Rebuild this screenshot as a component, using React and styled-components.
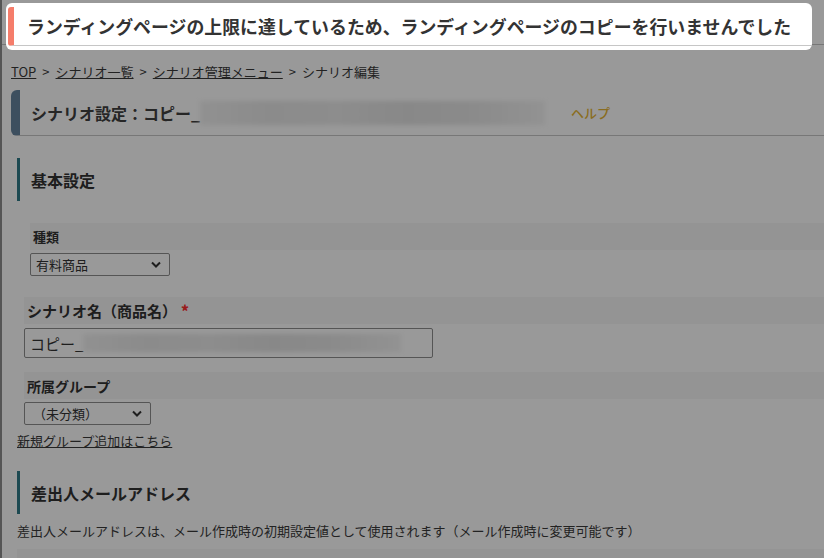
import React from 'react'
import styled, { createGlobalStyle } from 'styled-components'

const GlobalStyle = createGlobalStyle`
  html, body {
    margin: 0;
    padding: 0;
    background: #fff;
  }
  body {
    font-family: "Noto Sans CJK JP", "Noto Sans", sans-serif;
    color: #383838;
    overflow: hidden;
  }
`

const Page = styled.div`
  position: relative;
  min-height: 558px;
  border-left: 2px solid #8e8e8e;
  box-sizing: border-box;
`

const TopBar = styled.div`
  height: 44px;
  border-bottom: 1px solid #c6c6c6;
`

const Breadcrumb = styled.nav`
  margin: 17px 0 0 9px;
  font-size: 13px;
  line-height: 20px;
  color: #3a3a3a;
  display: flex;
  gap: 6px;
  a {
    color: #3a3a3a;
    text-decoration: underline;
  }
`

const PageHeader = styled.div`
  margin: 8px 0 0 9px;
  height: 45px;
  display: flex;
  align-items: center;
  border-bottom: 1px solid #c6c6c6;
  border-left: 9px solid #67849e;
  border-radius: 6px 0 0 6px;
  padding-left: 11px;
`

const PageTitle = styled.h1`
  margin: 0;
  font-size: 16px;
  font-weight: 700;
  color: #404040;
  display: flex;
  align-items: center;
`

const Blur = styled.span`
  display: inline-block;
  width: ${p => p.$w}px;
  height: ${p => p.$h}px;
  background: linear-gradient(90deg, #f2f2f2 0%, #e8e8e8 20%, #ebebeb 40%, #e3e3e3 60%, #e8e8e8 80%, #f4f4f4 100%);
  filter: blur(2px);
`

const HelpLink = styled.a`
  margin-left: 26px;
  font-size: 13px;
  color: #e6b534;
  font-weight: 500;
`

const Body = styled.div`
  padding-left: 15px;
`

const SectionTitle = styled.h2`
  margin: ${p => p.$top}px 0 0 0;
  height: 43px;
  display: flex;
  align-items: center;
  border-left: 3px solid #2f7b88;
  padding-left: 11px;
  font-size: 16px;
  font-weight: 700;
  color: #333;
`

const Field = styled.div`
  margin-top: ${p => p.$top}px;
  padding-left: ${p => p.$indent}px;
`

const Label = styled.div`
  height: 27px;
  background: #f7f7f7;
  display: flex;
  align-items: center;
  padding-left: 3px;
  font-size: ${p => p.$size}px;
  font-weight: 700;
  color: #333;
  b {
    color: #ff2e2e;
    margin-left: 4px;
  }
`

const Select = styled.select`
  margin-top: 3px;
  display: block;
  width: ${p => p.$w}px;
  height: 23px;
  appearance: none;
  border: 1px solid #8e8e8e;
  border-radius: 2px;
  background: #fff url("data:image/svg+xml;utf8,<svg xmlns='http://www.w3.org/2000/svg' width='10' height='7' viewBox='0 0 10 7'><path d='M1 1.5l4 4 4-4' fill='none' stroke='%23333' stroke-width='2'/></svg>") no-repeat right 8px center;
  font-family: "Noto Sans CJK JP", sans-serif;
  font-size: 13px;
  color: #333;
  padding: 0 0 0 ${p => p.$pad}px;
`

const InputBox = styled.div`
  margin-top: 4px;
  width: 409px;
  height: 30px;
  box-sizing: border-box;
  border: 1px solid #8e8e8e;
  border-radius: 2px;
  background: #fff;
  display: flex;
  align-items: center;
  padding-left: 5px;
  font-size: 15px;
  color: #333;
`

const TextLink = styled.a`
  display: block;
  margin-top: 7px;
  font-size: 13px;
  color: #3a3a3a;
  text-decoration: underline;
  line-height: 18px;
`

const Note = styled.p`
  margin: 7px 0 0 0;
  font-size: 13px;
  line-height: 20px;
  color: #3a3a3a;
`

const StubRow = styled.div`
  margin-top: 8px;
  height: 30px;
  background: #f7f7f7;
`

const Overlay = styled.div`
  position: fixed;
  inset: 0;
  background: rgba(0, 0, 0, 0.4);
`

const Toast = styled.div`
  position: fixed;
  top: 3px;
  left: 6px;
  width: 806px;
  height: 47px;
  box-sizing: border-box;
  background: #fff;
  border-radius: 6px;
  padding: 4px 0 0 2px;
  display: flex;
`

const ToastInner = styled.div`
  flex: 1;
  height: 38px;
  display: flex;
  align-items: center;
  border-left: 6px solid #f57d6b;
  border-radius: 3px 0 0 3px;
  border-bottom: 1px solid #c6c6c6;
  padding-left: 13px;
  font-size: 17.9px;
  font-weight: 700;
  color: #333;
  white-space: nowrap;
`

export default function App() {
  return (
    <>
      <GlobalStyle />
      <Page>
        <TopBar />
        <Breadcrumb>
          <a href="#">TOP</a>&gt;
          <a href="#">シナリオ一覧</a>&gt;
          <a href="#">シナリオ管理メニュー</a>&gt;
          <span>シナリオ編集</span>
        </Breadcrumb>
        <PageHeader>
          <PageTitle>
            シナリオ設定：コピー_
            <Blur $w={345} $h={24} />
          </PageTitle>
          <HelpLink>ヘルプ</HelpLink>
        </PageHeader>
        <Body>
          <SectionTitle $top={22}>基本設定</SectionTitle>
          <Field $top={22} $indent={13}>
            <Label $size={13}>種類</Label>
            <Select $w={140} $pad={5} defaultValue="paid">
              <option value="paid">有料商品</option>
            </Select>
          </Field>
          <Field $top={21} $indent={7}>
            <Label $size={15}>シナリオ名（商品名）<b>*</b></Label>
            <InputBox>
              コピー_
              <Blur $w={318} $h={18} />
            </InputBox>
          </Field>
          <Field $top={14} $indent={7}>
            <Label $size={14}>所属グループ</Label>
            <Select $w={127} $pad={8} defaultValue="none">
              <option value="none">（未分類）</option>
            </Select>
          </Field>
          <TextLink href="#">新規グループ追加はこちら</TextLink>
          <SectionTitle $top={21}>差出人メールアドレス</SectionTitle>
          <Note>差出人メールアドレスは、メール作成時の初期設定値として使用されます（メール作成時に変更可能です）</Note>
          <StubRow />
        </Body>
        <Overlay />
        <Toast>
          <ToastInner>ランディングページの上限に達しているため、ランディングページのコピーを行いませんでした</ToastInner>
        </Toast>
      </Page>
    </>
  )
}
